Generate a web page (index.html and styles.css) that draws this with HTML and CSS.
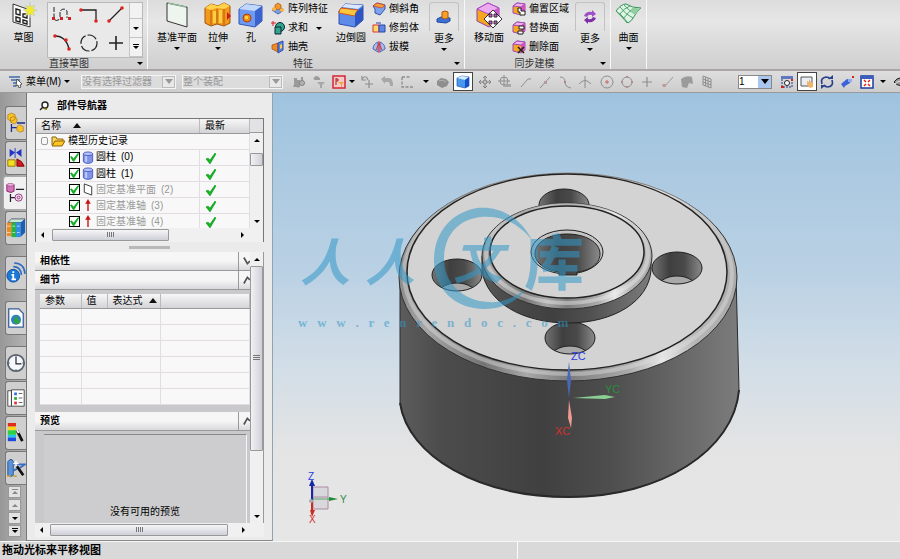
FILE: index.html
```html
<!DOCTYPE html>
<html lang="zh-CN">

<head>
    <meta charset="UTF-8">
    <meta name="viewport" content="width=device-width, initial-scale=1.0">
    <title>部件导航器</title>
    <link rel="stylesheet" href="styles.css">
</head>

<body>
    <!-- 公用图标 -->
    <svg class="defs" width="0" height="0">
        <symbol id="check" viewBox="0 0 12 12"><path d="M1 7l2-1 2 2 5-7 1 1-6 10z" fill="#12b422" stroke="#0a8c18" stroke-width=".5"/></symbol>
        <symbol id="cyl" viewBox="0 0 12 14"><path d="M1 3v8c0 3 10 3 10 0V3z" fill="#7f93ea" stroke="#4a5cc0"/><path d="M3 4v8h2V4z" fill="#c3cdfb"/><ellipse cx="6" cy="3" rx="5" ry="2" fill="#b5c1fa" stroke="#4a5cc0"/></symbol>
        <symbol id="axis" viewBox="0 0 12 14"><path d="M6 13V3" stroke="#c81414" stroke-width="1.5"/><path d="M6 0l3 5H3z" fill="#c81414"/></symbol>
        <symbol id="cube" viewBox="0 0 14 14"><path d="M1 4l4-3 8 1v8l-4 3-8-2z" fill="#f6a623" stroke="#a04bb4"/><path d="M1 4l4-3 8 1-4 3z" fill="#efb4ee" stroke="#a04bb4"/><path d="M9 5v8l4-3V2z" fill="#d44fc0"/></symbol>
    </svg>

    <header class="ribbon">
        <section class="group">
            <div class="tools">
                <button class="tool sketch">
                    <svg width="26" height="26" viewBox="0 0 26 26"><path d="M2 2l17 6v17L2 20z" fill="#fafafa" stroke="#333"/><path d="M5 7l4 1v5l-4-1zM12 12h4v4l-4-1zM5 15l4 1v4l-4-1zM12 18l4 1v3l-4-1z" fill="none" stroke="#222" stroke-width="1.4"/><path d="M19 0l1 5 4-2-2 4 4 1-4 2 2 4-4-2-1 4-1-4-4 2 2-4-4-2 4-1-2-4 4 2z" fill="#f4ea2c" stroke="#b5c7d6" stroke-width=".5"/></svg>
                    <span>草图</span>
                </button>
                <div class="gallery">
                    <div class="gallery-grid">
                        <button aria-label="轮廓"><svg width="22" height="20" viewBox="0 0 22 20"><path d="M3 2v12q2 3 6 0M9 12V6q4-4 7 0v7" fill="none" stroke="#222" stroke-dasharray="5 1.5"/><path d="M1 12h3v3H1zM9 12h3v3H9zM17 12h3v3h-3z" fill="#c22"/></svg></button>
                        <button aria-label="矩形"><svg width="22" height="20" viewBox="0 0 22 20"><path d="M3 5h15v10" fill="none" stroke="#222" stroke-width="1.3"/><circle cx="3" cy="5" r="1.8" fill="#d22"/><circle cx="18" cy="16" r="1.8" fill="#d22"/></svg></button>
                        <button aria-label="直线"><svg width="22" height="20" viewBox="0 0 22 20"><path d="M4 16L17 3" stroke="#222" stroke-width="1.3"/><circle cx="4" cy="16" r="1.8" fill="#d22"/><circle cx="17" cy="3" r="1.8" fill="#d22"/></svg></button>
                        <button aria-label="圆弧"><svg width="22" height="20" viewBox="0 0 22 20"><path d="M4 4q11 0 14 13" fill="none" stroke="#222" stroke-width="1.3"/><circle cx="4" cy="4" r="1.8" fill="#d22"/><circle cx="15" cy="8" r="1.8" fill="#d22"/><circle cx="18" cy="17" r="1.8" fill="#d22"/></svg></button>
                        <button aria-label="圆"><svg width="22" height="20" viewBox="0 0 22 20"><circle cx="11" cy="11" r="8" fill="none" stroke="#222" stroke-width="1.2" stroke-dasharray="10 2"/></svg></button>
                        <button aria-label="点"><svg width="22" height="20" viewBox="0 0 22 20"><path d="M11 4v14M4 11h14" stroke="#222" stroke-width="1.6"/></svg></button>
                    </div>
                    <div class="gallery-scroll">
                        <button aria-label="向上" disabled></button>
                        <button aria-label="向下"><i class="caret"></i></button>
                        <button aria-label="更多曲线"><i class="caret lined"></i></button>
                    </div>
                </div>
            </div>
            <div class="caption left"><span>直接草图</span><i class="caret"></i></div>
        </section>

        <section class="group feature">
            <div class="tools">
                <button class="tool plane">
                    <svg width="26" height="26" viewBox="0 0 26 26"><path d="M3 1l20 4v20L3 19z" fill="#eef5ee" stroke="#333"/><path d="M4 1l18 4" stroke="#8fb79a" stroke-width="1.5"/></svg>
                    <span>基准平面</span><i class="caret"></i>
                </button>
                <button class="tool extrude">
                    <svg width="28" height="26" viewBox="0 0 28 26"><path d="M1 6l6-4 7 2 6-3 6 3v17l-6 3-7-2-6 2-6-3z" fill="#f39a1d" stroke="#a5520c"/><path d="M1 6l6-4 7 2 6-3 6 3-6 3-7-1-6 2z" fill="#ffd34a"/><path d="M7 8v15M13 7v15M20 7v16" stroke="#b45a10"/><path d="M9 9h3v12H9zM15 8h3v13h-3z" fill="#ffcf42"/><path d="M23 10l4 4-4 4z" fill="#d21c1c"/></svg>
                    <span>拉伸</span><i class="caret"></i>
                </button>
                <button class="tool hole">
                    <svg width="26" height="26" viewBox="0 0 26 26"><path d="M1 7l7-5 16 2v15l-7 6-16-3z" fill="#6e9af0" stroke="#3357b8"/><path d="M1 7l7-5 16 2-7 5z" fill="#c1d8fc"/><path d="M17 9l7-5v15l-7 6z" fill="#3a63cf"/><circle cx="9" cy="16" r="4" fill="#f58a1c" stroke="#a53f0c"/><path d="M7 14h3v3H7z" fill="#ffd23e"/></svg>
                    <span>孔</span>
                </button>
                <div class="stack">
                    <button><svg width="14" height="14" viewBox="0 0 14 14"><path d="M1 8l6-4 6 4-6 4z" fill="#7ba0e8" stroke="#4463b0"/><path d="M4 3l3-2 3 2v3L7 8 4 6z" fill="#f3992a" stroke="#a6500e" stroke-width=".7"/><path d="M1 6l2-1 2 1v2L3 9 1 8zM9 7l2-1 2 1v2l-2 1-2-1z" fill="#f9b347"/></svg>阵列特征</button>
                    <button><svg width="14" height="14" viewBox="0 0 14 14"><circle cx="9" cy="6" r="4.500" fill="#2fa78c" stroke="#123"/><path d="M4 6h6v7H4z" fill="#2fa78c" stroke="#123"/><path d="M2 0v5M0 2h5" stroke="#d22"/></svg>求和<i class="caret"></i></button>
                    <button><svg width="14" height="14" viewBox="0 0 14 14"><path d="M1 5l6-2v9l-6-3z" fill="#f08a24" stroke="#a5480c" stroke-width=".7"/><path d="M7 3l5-2v9l-5 3z" fill="#5a82dd" stroke="#2c4ba8"/><path d="M9 5l2-1v4l-2 1z" fill="#ffcc44"/></svg>抽壳</button>
                </div>
                <button class="tool blend">
                    <svg width="28" height="26" viewBox="0 0 28 26"><path d="M2 9l6-7 18 1v15l-8 7-16-3z" fill="#5e8ae8" stroke="#2f50b0"/><path d="M8 2l18 1-5 4-16-2z" fill="#dbe8ff"/><path d="M4 6l17 2q-3 3-3 6L2 11q0-3 2-5z" fill="#ffc63d" stroke="#d0581a"/><path d="M18 14q0-5 8-9v13l-8 7z" fill="#2f55c4"/></svg>
                    <span>边倒圆</span>
                </button>
                <div class="stack second">
                    <button><svg width="14" height="14" viewBox="0 0 14 14"><path d="M1 4l4-3 8 2v4l-5 6-5-2V7z" fill="#7da2ee" stroke="#3454a8"/><path d="M1 4l4-3 8 2-3 3z" fill="#f3a032" stroke="#c33" stroke-width=".7"/></svg>倒斜角</button>
                    <button><svg width="14" height="14" viewBox="0 0 14 14"><path d="M1 4h6v7H1z" fill="#ffd96b" stroke="#d33"/><path d="M7 4h6v7H7z" fill="#5f86e6" stroke="#2846a8"/><path d="M4 2h5" stroke="#2846a8"/></svg>修剪体</button>
                    <button><svg width="14" height="14" viewBox="0 0 14 14"><path d="M1 9q0-5 5-7v10zM13 9q0-5-5-7v10z" fill="#a9bbed" stroke="#5268b8"/><path d="M7 1v12M4 10l3-7 3 7" fill="none" stroke="#d33"/></svg>拔模</button>
                </div>
                <button class="tool more">
                    <span class="more-box"><svg width="16" height="16" viewBox="0 0 16 16"><path d="M1 10l4-2 9 1v3l-4 2-9-1z" fill="#3c72d8" stroke="#1f479c"/><path d="M6 3l3-1 3 1v6l-3 1-3-1z" fill="#f5a12a" stroke="#ad560e"/></svg></span>
                    <span>更多</span><i class="caret"></i>
                </button>
            </div>
            <div class="caption"><span>特征</span><i class="caret"></i></div>
        </section>

        <section class="group sync">
            <div class="tools">
                <button class="tool move">
                    <svg width="28" height="26" viewBox="0 0 28 26"><path d="M2 7l11-6 11 5v13l-10 6-12-6z" fill="#f6a51f" stroke="#8e3eaa"/><path d="M2 7l11-6 11 5-11 6z" fill="#eeaaf0" stroke="#a54bc0"/><path d="M13 12l11-6v13l-10 6z" fill="#cf56cc"/><path d="M18 8l4 4h-3v3h3v-3l5 5-5 5v-3h-3v3h3l-4 4-4-4h3v-3h-3v3l-5-5 5-5v3h3v-3h-3z" fill="#fff" stroke="#222" stroke-width=".9"/></svg>
                    <span>移动面</span>
                </button>
                <div class="stack">
                    <button><svg width="14" height="14" viewBox="0 0 14 14"><use href="#cube"/><path d="M6 6h3v3h4v4H8v-3H6z" fill="#fff" stroke="#222"/></svg>偏置区域</button>
                    <button><svg width="14" height="14" viewBox="0 0 14 14"><use href="#cube"/><path d="M7 5h5v3H7zM6 10h5v3H6z" fill="#fff" stroke="#222"/></svg>替换面</button>
                    <button><svg width="14" height="14" viewBox="0 0 14 14"><use href="#cube"/><path d="M6 7l6 6M12 7l-6 6" stroke="#222" stroke-width="1.6"/></svg>删除面</button>
                </div>
                <button class="tool more">
                    <span class="more-box"><svg width="16" height="16" viewBox="0 0 16 16"><path d="M2 7q2-5 8-4V1l4 4-4 3V6Q6 5 5 8z" fill="#a04fc8"/><path d="M14 9q-2 5-8 4v2l-4-4 4-3v2q4 1 5-2z" fill="#7c2fa6"/></svg></span>
                    <span>更多</span><i class="caret"></i>
                </button>
            </div>
            <div class="caption"><span>同步建模</span><i class="caret"></i></div>
        </section>

        <section class="group surface">
            <div class="tools">
                <button class="tool">
                    <svg width="28" height="26" viewBox="0 0 28 26"><path d="M1 9q5-7 10-7 6 4 15 4-4 3-6 7-3 6-7 8Q7 13 1 9z" fill="#dff2e4" stroke="#3a8f5c"/><path d="M5 5q6 8 13 11M9 3q6 7 12 9M1 9q8 8 11 12M4 13q5-7 11-9M8 17q5-7 12-12" fill="none" stroke="#4ba66c"/><path d="M17 5q5 2 9 1-4 3-6 7-2-1-4-3z" fill="#8fcfa2"/></svg>
                    <span>曲面</span><i class="caret"></i>
                </button>
            </div>
        </section>
    </header>

    <nav class="toolbar">
        <button class="menu">
            <svg width="15" height="13" viewBox="0 0 15 13"><path d="M1 2h11M3 5h9M5 8h3M5 11h3" stroke="#456ba8" stroke-width="1.500"/><path d="M9 4l5 5-2 1 1 2-2 1-1-3-2 1z" fill="#fff" stroke="#333" stroke-width=".8"/></svg>
            菜单(M)<i class="caret"></i>
        </button>
        <i class="sep"></i>
        <label class="combo filter"><select disabled aria-label="选择过滤器"><option>没有选择过滤器</option></select><span class="drop"><i class="caret big"></i></span></label>
        <label class="combo scope"><select disabled aria-label="选择范围"><option>整个装配</option></select><span class="drop"><i class="caret big"></i></span></label>
        <div class="icons faded">
            <button aria-label="装配约束"><svg viewBox="0 0 14 14"><path d="M2 3h3v8H2zM5 5h3v7H5zM9 2h2v5H9z" fill="#888"/><circle cx="10" cy="8" r="2.500" fill="#aaa" stroke="#666"/><path d="M1 11l6 1" stroke="#777"/></svg></button>
            <button aria-label="过滤选择"><svg viewBox="0 0 14 14"><path d="M2 4q3-4 5 0M2 4h6" fill="none" stroke="#888" stroke-width="2"/><path d="M5 7h8l-3 3v3H8v-3z" fill="#999"/></svg></button>
        </div>
        <button class="icon-btn" aria-label="重置过滤器"><svg viewBox="0 0 14 14"><path d="M1 1h12v12H1z" fill="#f7c8c8" stroke="#d3263a" stroke-width="1.5"/><path d="M4 3v7M4 4h2v2H4" fill="none" stroke="#a22"/><path d="M6 7h6l-2 2v3H9V9z" fill="#f0a326"/></svg></button>
        <i class="caret"></i>
        <div class="icons faded undo">
            <button aria-label="撤消选择"><svg viewBox="0 0 14 14"><path d="M2 4q4-5 6 1M2 1v4h4M9 5v8M5 9h8" fill="none" stroke="#777" stroke-width="1.2"/></svg></button>
            <button aria-label="返回"><svg viewBox="0 0 14 14"><path d="M1 4l4-3v2h4q4 0 4 8h-3q0-4-2-4H5v2z" fill="#999"/></svg></button>
            <button aria-label="矩形选择"><svg viewBox="0 0 14 14"><path d="M2 2v10h11M2 2h8" fill="none" stroke="#777" stroke-width="1.300" stroke-dasharray="3 1.500"/></svg></button>
        </div>
        <i class="caret wide"></i>
        <div class="icons">
            <button class="faded" aria-label="实体"><svg viewBox="0 0 14 14"><path d="M1 6l4-3 5 1 3 3-2 4-5 2-5-3z" fill="#777"/><path d="M3 6q4-2 7 1" stroke="#aaa" fill="none"/></svg></button>
            <button class="active" aria-label="着色"><svg viewBox="0 0 14 14"><path d="M1 3l5-2 7 1v9l-4 2-8-2z" fill="#4a97ee" stroke="#1c58b8" stroke-width=".7"/><path d="M1 3l5-2 7 1-4 3z" fill="#d5ecff"/><path d="M9 5l4-3v9l-4 2z" fill="#1550c4"/></svg></button>
        </div>
        <div class="icons faded snaps">
            <button aria-label="移动点"><svg viewBox="0 0 14 14"><path d="M7 1v12M1 7h12M5 3l2-2 2 2M5 11l2 2 2-2M3 5L1 7l2 2M11 5l2 2-2 2" fill="none" stroke="#666"/><circle cx="7" cy="7" r="2" fill="#bbb" stroke="#666"/></svg></button>
            <button aria-label="捕捉点"><svg viewBox="0 0 14 14"><circle cx="6" cy="6" r="4" fill="none" stroke="#777"/><path d="M6 0v12M0 6h12" stroke="#777"/><path d="M7 9h6v3H7z" fill="#999"/></svg></button>
            <button aria-label="端点"><svg viewBox="0 0 14 14"><path d="M3 12l7-8h3" fill="none" stroke="#777"/></svg></button>
            <button aria-label="中点"><svg viewBox="0 0 14 14"><path d="M2 13L12 2" stroke="#777"/><path d="M6 6h3v3H6z" fill="#a88"/></svg></button>
            <button aria-label="控制点"><svg viewBox="0 0 14 14"><path d="M2 2q5 0 5 5t6 6" fill="none" stroke="#777"/><path d="M6 6h2v2H6z" fill="#a66"/></svg></button>
            <button aria-label="交点"><svg viewBox="0 0 14 14"><path d="M1 9q6-7 12 0M7 1v12" fill="none" stroke="#777"/></svg></button>
        </div>
        <div class="icons faded snaps">
            <button aria-label="圆弧中心"><svg viewBox="0 0 14 14"><circle cx="7" cy="7" r="6" fill="none" stroke="#777"/><path d="M7 5v4M5 7h4" stroke="#b44"/></svg></button>
            <button aria-label="象限点"><svg viewBox="0 0 14 14"><circle cx="7" cy="7" r="5" fill="none" stroke="#777"/><path d="M6 1h2v2H6zM6 11h2v2H6zM1 6h2v2H1zM11 6h2v2h-2z" fill="#a77"/></svg></button>
            <button aria-label="现有点"><svg viewBox="0 0 14 14"><path d="M7 2v10M2 7h10" stroke="#777" stroke-width="1.200"/></svg></button>
            <button aria-label="曲线上的点"><svg viewBox="0 0 14 14"><path d="M2 10l3 1L13 2" fill="none" stroke="#888"/><path d="M3 9h3v3H3z" fill="#b88"/></svg></button>
            <button aria-label="面上的点"><svg viewBox="0 0 14 14"><path d="M1 4q5-4 11-2l1 7-4-1-2 5-5-1z" fill="#888"/></svg></button>
            <button aria-label="网格点"><svg viewBox="0 0 14 14"><path d="M3 1l8 3v9l-8-3zM5.500 2v9M8 3v9M3 4l8 3M3 7l8 3" fill="none" stroke="#777"/></svg></button>
        </div>
        <i class="sep dark"></i>
        <label class="combo layer"><select aria-label="图层"><option>1</option></select><span class="drop"><i class="caret big"></i></span></label>
        <div class="icons view">
            <button aria-label="缩放窗口"><svg viewBox="0 0 14 14"><path d="M2 2h10v10H2z" fill="none" stroke="#22388a" stroke-dasharray="2 1"/><path d="M1 1h12v3H1z" fill="#6078c0"/><circle cx="7" cy="8" r="2.500" fill="#fff" stroke="#222"/><path d="M1 11h3v2H1zM11 4h2v2h-2z" fill="#c22"/></svg></button>
            <button class="active" aria-label="适合窗口"><svg viewBox="0 0 14 14"><path d="M1 2h11v9H1z" fill="#e7eef8" stroke="#555"/><path d="M7 6l2 1V4l2 3 2 1v4l-3 1-3-3z" fill="#f2b46a"/></svg></button>
            <button aria-label="旋转"><svg viewBox="0 0 14 14"><path d="M2 9Q0 3 6 2q3 0 4 2M12 5q2 6-4 7-3 0-4-2" fill="none" stroke="#27418e" stroke-width="1.700"/><path d="M8 4h5V0zM6 10H1v4z" fill="#27418e"/></svg></button>
            <button aria-label="渲染样式"><svg viewBox="0 0 14 14"><path d="M1 9l6-5 4 1-1 3-5 3-1 2z" fill="#3c62d8"/><path d="M8 4h4v3H8z" fill="#8eaaf4"/><path d="M12 1h2v2h-2z" fill="#c22"/></svg></button>
            <button aria-label="窗口布局"><svg viewBox="0 0 14 14"><path d="M1 1h12v12H1z" fill="#fff" stroke="#1c3da0" stroke-width="1.500"/><path d="M1 1h12v3H1z" fill="#3b5cc0"/><path d="M4 5l2 2M10 5L8 7M4 11l2-2M10 11L8 9" stroke="#d22" stroke-width="1.500"/></svg></button>
        </div>
        <i class="caret wide"></i>
        <button class="icon-btn" aria-label="显示和隐藏"><svg viewBox="0 0 14 14"><path d="M1 7q6-8 12 0-6 7-12 0z" fill="#999" stroke="#222"/><path d="M2 9q5-5 10-2" fill="none" stroke="#eee"/></svg></button>
    </nav>

    <main>
        <aside class="resource-bar">
            <button class="tab" aria-label="装配导航器"><svg viewBox="0 0 22 24"><path d="M2 3l4-2 4 2v5l-4 2-4-2zM5 6l4-1 3 2v4l-3 2-4-2z" fill="#f7c32b" stroke="#b87b08" stroke-width=".8"/><path d="M6 13v9M6 17h6M12 12h9" stroke="#1b2a8c" stroke-width="1.400"/><path d="M12 16l3-2 4 2v5l-4 1-3-2z" fill="#f7c32b" stroke="#b87b08" stroke-width=".8"/></svg></button>
            <button class="tab" aria-label="约束导航器"><svg viewBox="0 0 22 24"><path d="M4 2l6 4-6 5zM17 2l-6 4 6 5z" fill="#2034c8"/><path d="M10 1v11" stroke="#2034c8"/><path d="M2 14h8v7H2z" fill="#f5e020" stroke="#976f00"/><path d="M12 21v-8q6 2 8 8z" fill="#d81818" stroke="#700"/></svg></button>
            <button class="tab current" aria-label="部件导航器"><svg viewBox="0 0 22 24"><path d="M2 3v7q5 3 8 0V3z" fill="#d572b8" stroke="#7c2a6c"/><ellipse cx="6" cy="3" rx="4" ry="1.500" fill="#f4b4e0" stroke="#7c2a6c" stroke-width=".6"/><path d="M12 8h9M6 13v9M6 17h5" stroke="#223" stroke-width="1.400"/><circle cx="15" cy="17" r="4" fill="#f6d8f0" stroke="#8a3478"/><circle cx="15" cy="17" r="1.500" fill="none" stroke="#8a3478"/></svg></button>
            <button class="tab" aria-label="重用库"><svg viewBox="0 0 22 24"><path d="M2 6l4-4h15l-4 4z" fill="#c8ead2" stroke="#557"/><path d="M1 6h5v15H1z" fill="#f08a1c"/><path d="M6 6h5v16H6z" fill="#28b04c"/><path d="M11 6h5v16h-5z" fill="#2f8fe0"/><path d="M16 6l5-4v15l-5 5z" fill="#1a5fb4"/><path d="M1 10h4M1 17h4M7 10h3M7 17h3M12 10h3M12 17h3" stroke="#fff" stroke-opacity=".7"/></svg></button>
            <button class="tab apart" aria-label="HD3D 工具"><svg viewBox="0 0 22 24"><circle cx="8" cy="15" r="7" fill="#1b79d8" stroke="#0f4d98"/><path d="M8 10v2M6 14h2v5M6 19h5" stroke="#fff" stroke-width="2" fill="none"/><path d="M8 5q8 0 9 9M9 1q11 0 12 12" fill="none" stroke="#2f6cc0" stroke-width="1.800"/></svg></button>
            <button class="tab apart" aria-label="浏览器"><svg viewBox="0 0 22 24"><path d="M3 2h11l5 5v15H3z" fill="#fff" stroke="#355f9c" stroke-width="1.400"/><circle cx="11" cy="14" r="5.500" fill="#2f7fc8"/><path d="M8 16l3-7 2 3 3 5-5 2z" fill="#2fa444"/></svg></button>
            <button class="tab apart" aria-label="历史记录"><svg viewBox="0 0 22 24"><circle cx="11" cy="12" r="9" fill="#f5f8fc" stroke="#596270" stroke-width="2"/><path d="M11 5v8h6" fill="none" stroke="#223" stroke-width="1.300"/><path d="M11 4v1M11 19v1M3 12h1M18 12h1" stroke="#223"/></svg></button>
            <button class="tab" aria-label="系统材料"><svg viewBox="0 0 22 24"><path d="M2 4h4v17H2zM6 3h14v18H6z" fill="#fff" stroke="#444"/><path d="M9 6h3v3H9z" fill="#2a6fe0"/><path d="M9 11h3v3H9z" fill="#27a838"/><path d="M9 16h3v3H9z" fill="#d33"/><path d="M14 7h4M14 12h4M14 17h4" stroke="#555"/></svg></button>
            <button class="tab" aria-label="可视化"><svg viewBox="0 0 22 24"><path d="M2 1h9v4H2z" fill="#e02a1a"/><path d="M2 5h9v4H2z" fill="#f6d51c"/><path d="M2 9h9v5H2z" fill="#2dd040"/><path d="M2 14h9v3H2z" fill="#23c4e8"/><path d="M2 17h9v4H2z" fill="#1d49dc"/><path d="M12 9l6 12" stroke="#111" stroke-width="3"/><path d="M12 9l2 3" stroke="#fff" stroke-width="2"/></svg></button>
            <button class="tab" aria-label="角色"><svg viewBox="0 0 22 24"><path d="M2 5q4-5 6 0v15q-3 3-6 0z" fill="#5b93d6" stroke="#225398"/><path d="M8 8h13l-6 4M8 15l4-2" fill="none" stroke="#3a6fc0" stroke-width="2"/><path d="M1 21h4M8 21h4" stroke="#c9a53c" stroke-width="2"/><path d="M12 10l7 10" stroke="#111" stroke-width="3"/><path d="M11 4v6M8 7h6" stroke="#fff" stroke-width="1.500"/></svg></button>
            <div class="pager">
                <button aria-label="首页" disabled><i class="caret up lined"></i></button>
                <button aria-label="上一页" disabled><i class="caret up"></i></button>
                <button aria-label="下一页"><i class="caret"></i></button>
                <button aria-label="末页"><i class="caret lined"></i></button>
            </div>
        </aside>

        <section class="navigator">
            <h1><svg width="10" height="10" viewBox="0 0 10 10"><circle cx="6" cy="4" r="3" fill="#fff" stroke="#222" stroke-width="1.400"/><path d="M1 9l3-3" stroke="#222" stroke-width="1.400"/><path d="M5 7l3 1" stroke="#776b10" stroke-width="2"/></svg>部件导航器</h1>

            <div class="tree-box">
                <div class="tree-body">
                    <div class="tree-clip">
                        <table class="tree">
                            <thead>
                                <tr><th>名称<i class="sort"></i></th><th class="latest">最新</th></tr>
                            </thead>
                            <tbody>
                                <tr><td class="root"><i class="expander"></i><svg width="14" height="12" viewBox="0 0 14 12"><path d="M1 10V2h4l1 2h6v2" fill="#fbd45e" stroke="#8a6208"/><path d="M1 11l3-5h10l-3 5z" fill="#ffc426" stroke="#8a6208"/></svg>模型历史记录</td><td></td></tr>
                                <tr><td><label><input type="checkbox" checked><svg width="12" height="14"><use href="#cyl"/></svg>圆柱&ensp;(0)</label></td><td><svg width="12" height="12"><use href="#check"/></svg></td></tr>
                                <tr><td><label><input type="checkbox" checked><svg width="12" height="14"><use href="#cyl"/></svg>圆柱&ensp;(1)</label></td><td><svg width="12" height="12"><use href="#check"/></svg></td></tr>
                                <tr class="dim"><td><label><input type="checkbox" checked><svg width="12" height="14" viewBox="0 0 12 14"><path d="M2 1l8 3v9l-8-3z" fill="#fff" stroke="#333"/></svg>固定基准平面&ensp;(2)</label></td><td><svg width="12" height="12"><use href="#check"/></svg></td></tr>
                                <tr class="dim"><td><label><input type="checkbox" checked><svg width="12" height="14"><use href="#axis"/></svg>固定基准轴&ensp;(3)</label></td><td><svg width="12" height="12"><use href="#check"/></svg></td></tr>
                                <tr class="dim"><td><label><input type="checkbox" checked><svg width="12" height="14"><use href="#axis"/></svg>固定基准轴&ensp;(4)</label></td><td><svg width="12" height="12"><use href="#check"/></svg></td></tr>
                            </tbody>
                        </table>
                    </div>
                    <div class="vscroll tree-scroll"><i class="caret up"></i><span class="thumb"></span><i class="caret"></i></div>
                </div>
                <div class="hscroll"><i class="caret to-left"></i><span class="thumb"></span><i class="caret to-right"></i></div>
            </div>
            <div class="splitter"></div>

            <div class="details">
                <div class="details-body">
                    <button class="bar">相依性<svg width="8" height="10" viewBox="0 0 8 10"><path d="M1 1l4 7 3-3" fill="none" stroke="#555" stroke-width="2"/></svg></button>
                    <button class="bar">细节<svg width="8" height="10" viewBox="0 0 8 10"><path d="M1 9l4-7 3 3" fill="none" stroke="#555" stroke-width="2"/></svg></button>
                    <div class="params">
                        <table>
                            <thead>
                                <tr><th class="c-param">参数</th><th class="c-value">值</th><th class="c-expr">表达式<i class="sort"></i></th><th></th></tr>
                            </thead>
                            <tbody>
                                <tr><td></td><td></td><td></td><td></td></tr>
                                <tr><td></td><td></td><td></td><td></td></tr>
                                <tr><td></td><td></td><td></td><td></td></tr>
                                <tr><td></td><td></td><td></td><td></td></tr>
                                <tr><td></td><td></td><td></td><td></td></tr>
                                <tr><td></td><td></td><td></td><td></td></tr>
                            </tbody>
                        </table>
                    </div>
                    <button class="bar">预览<svg width="8" height="10" viewBox="0 0 8 10"><path d="M1 9l4-7 3 3" fill="none" stroke="#555" stroke-width="2"/></svg></button>
                    <div class="preview"><p>没有可用的预览</p></div>
                </div>
                <div class="vscroll"><i class="caret up"></i><span class="thumb grip"></span><i class="caret"></i></div>
            </div>
            <div class="hscroll lower"><i class="caret to-left"></i><span class="thumb"></span><i class="caret to-right"></i></div>
        </section>

        <section class="viewport">
            <svg class="scene" viewBox="273 93 627 448">
                <defs>
                    <linearGradient id="side"><stop offset="0" stop-color="#5c5c5c"/><stop offset=".12" stop-color="#4c4c4c"/><stop offset=".42" stop-color="#404040"/><stop offset=".62" stop-color="#4e4e4e"/><stop offset=".85" stop-color="#6a6a6a"/><stop offset="1" stop-color="#7c7c7c"/></linearGradient>
                    <linearGradient id="rim"><stop offset="0" stop-color="#8d8d8d"/><stop offset=".08" stop-color="#a6a6a6"/><stop offset=".25" stop-color="#747474"/><stop offset=".38" stop-color="#a8a8a8"/><stop offset=".5" stop-color="#7c7c7c"/><stop offset=".68" stop-color="#aaa"/><stop offset=".78" stop-color="#e8e8e8"/><stop offset=".88" stop-color="#b5b5b5"/><stop offset="1" stop-color="#aaa"/></linearGradient>
                    <linearGradient id="wall"><stop offset="0" stop-color="#747474"/><stop offset=".35" stop-color="#3f3f3f"/><stop offset=".65" stop-color="#4a4a4a"/><stop offset="1" stop-color="#8a8a8a"/></linearGradient>
                    <g id="bolt-hole">
                        <clipPath id="hole-clip"><ellipse rx="25" ry="16"/></clipPath>
                        <ellipse rx="25" ry="16" fill="url(#wall)"/>
                        <g clip-path="url(#hole-clip)"><ellipse cy="21" rx="20" ry="13" fill="#a9a9a9" stroke="#222"/></g>
                        <ellipse rx="25" ry="16" fill="none" stroke="#222"/>
                    </g>
                </defs>

                <!-- 外圆柱 -->
                <path d="M400 280V403C408 456 478 497 569 497C662 497 734 450 739 390L736 275z" fill="url(#side)" stroke="#2a2a2a"/>
                <path d="M400 403C408 456 478 497 569 497C662 497 734 450 739 390" fill="none" stroke="#2a2a2a" stroke-width="2"/>
                <ellipse cx="568" cy="277" rx="169" ry="104" fill="url(#rim)" stroke="#333"/>
                <ellipse cx="568" cy="274" rx="164" ry="100" fill="none" stroke="#ddd" stroke-width="4" opacity=".45"/>
                <ellipse cx="567" cy="272" rx="160" ry="98" fill="#d3d3d3" stroke="#222" stroke-width="1.500"/>
                <use href="#bolt-hole" x="564" y="205"/>
                <use href="#bolt-hole" x="457" y="275"/>
                <use href="#bolt-hole" x="677" y="268"/>
                <use href="#bolt-hole" x="570" y="338"/>

                <!-- 凸台 -->
                <path d="M482 256V271C487 302 522 323 568 323C614 323 649 301 651 270V256z" fill="url(#side)" stroke="#222"/>
                <ellipse cx="567" cy="256" rx="85" ry="53" fill="url(#rim)" stroke="#333"/>
                <ellipse cx="567" cy="254" rx="81" ry="49" fill="none" stroke="#eee" stroke-width="4" opacity=".45"/>
                <ellipse cx="567" cy="252" rx="77" ry="46" fill="#d3d3d3" stroke="#222" stroke-width="1.500"/>
                <ellipse cx="567" cy="252" rx="36" ry="22" fill="#c4c4c4" stroke="#222"/>
                <path d="M559 272v3h18v-3C593 270 600 262 600 254C600 242 585 234 567 234S535 242 535 254C535 262 544 270 559 272z" fill="url(#wall)" stroke="#222"/>

                <!-- 工作坐标系 -->
                <path d="M569 362l2 18-2 18-2-18z" fill="#4b68b8"/>
                <path d="M573 398l32-3 10 2-10 2z" fill="#8bcf94"/>
                <path d="M569 400l3 18-1 10-3-10z" fill="#f09a94"/>
                <text class="csys" x="571" y="360" fill="#2b3ce0">ZC</text>
                <text class="csys" x="605" y="393" fill="#2b8c3c">YC</text>
                <text class="csys" x="555" y="435" fill="#d43030">XC</text>

                <!-- 绝对坐标系 -->
                <path d="M313 487h15v22h-15zM313 497h15" fill="#d8d8dc" stroke="#b08aa4"/>
                <path d="M312 500V484" stroke="#1428a8" stroke-width="2"/><path d="M312 479l3 7h-6z" fill="#1428a8"/>
                <path d="M313 499h18" stroke="#5aa868"/><path d="M338 499l-9-2v4z" fill="#1d8c34"/>
                <path d="M312 501v11" stroke="#cc2b20" stroke-width="2"/><path d="M312 517l-2-7h5z" fill="#cc2b20"/>
                <circle cx="311" cy="501" r="2" fill="#aaa"/>
                <text class="csys small" x="308" y="480" fill="#2b3ce0">Z</text>
                <text class="csys small" x="340" y="503" fill="#2b8c3c">Y</text>
                <text class="csys small" x="309" y="523" fill="#d43030">X</text>

                <!-- 水印 -->
                <g class="mark">
                    <path d="M532 240C520 217 500 206 477 208C449 213 434 235 434 260C434 289 455 309 485 309C501 309 517 302 525 290C512 299 499 303 488 302C461 300 443 281 444 257C445 235 458 220 480 217C501 215 518 223 532 240z"/>
                    <text class="brush" x="300" y="281">人</text>
                    <text class="brush" x="365" y="281">人</text>
                    <text class="brush" x="453" y="279">文</text>
                    <text class="brush tall" x="524" y="285">库</text>
                    <text class="site" x="298" y="327">w   w   w   .   r   e   n   r   e   n   d   o   c   .   c   o   m</text>
                </g>
            </svg>
        </section>
    </main>

    <footer class="status"><p>拖动光标来平移视图</p><p></p></footer>
</body>

</html>
```
FILE: styles.css
```css
* {
    box-sizing: border-box;
}

body {
    display: flex;
    flex-direction: column;
    height: 100vh;
    margin: 0;
    overflow: hidden;
    background: #e4e4e4;
    color: #000;
    font-family: "Liberation Sans", "Noto Sans CJK SC", sans-serif;
    font-size: 10px;
    line-height: 12px;
}

button {
    padding: 0;
    border: 0;
    background: none;
    color: inherit;
    font: inherit;
    white-space: nowrap;
}

.defs {
    position: absolute;
}

svg {
    flex: none;
}

/* 菜单小三角 */
.caret {
    flex: none;
    width: 0;
    height: 0;
    border: 3px solid transparent;
    border-top-color: #000;
    border-bottom-width: 0;
}

.caret.up {
    border-width: 0 3px 3px;
    border-color: transparent transparent #000;
}

.caret.to-left {
    border-width: 3px 3px 3px 0;
    border-color: transparent #000;
}

.caret.to-right {
    border-width: 3px 0 3px 3px;
    border-color: transparent #000;
}

.caret.big {
    border-width: 5px 4px 0;
}

.caret.lined {
    position: relative;
}

.caret.lined::before {
    position: absolute;
    top: -5px;
    left: -3px;
    width: 6px;
    height: 1px;
    background: #000;
    content: "";
}

.caret.up.lined::before {
    top: -2px;
}

button:disabled .caret {
    opacity: .4;
}

/* 功能区 */
.ribbon {
    display: flex;
    flex: none;
    height: 69px;
    background: linear-gradient(#dcdcdc, #e6e6e6 30%, #cfcfcf);
}

.group {
    display: flex;
    flex-direction: column;
    padding: 2px 4px 0 0;
    border-right: 1px solid #f8f8f8;
}

.feature,
.sync {
    padding-left: 4px;
}

.tools {
    display: flex;
    flex: none;
    height: 56px;
}

.tool {
    display: flex;
    flex-direction: column;
    align-items: center;
    width: 40px;
}

.tool span {
    margin: 4px 0 3px;
}

.sketch {
    width: 47px;
}

.plane {
    width: 50px;
}

.extrude {
    width: 32px;
}

.hole {
    width: 34px;
}

.blend {
    width: 36px;
}

.surface {
    padding-right: 0;
}

.surface .tool {
    width: 35px;
}

.tool.more {
    width: 32px;
}

.tool .more-box {
    display: grid;
    place-items: center;
    width: 30px;
    height: 29px;
    margin: 0 0 -2px;
    border: 1px solid #c2c2c2;
    border-bottom: 0;
    border-radius: 3px 3px 0 0;
}

.gallery {
    display: flex;
    width: 96px;
    border: 1px solid #b9b9b9;
    background: #e9e9e9;
}

.gallery-grid {
    display: grid;
    flex: 1;
    grid-template-columns: repeat(3, 1fr);
    place-items: center;
}

.gallery-scroll {
    display: grid;
    width: 13px;
    background: #f2f2f2;
}

.gallery-scroll button {
    display: grid;
    place-items: center;
    border: 1px solid #c4c4c4;
    border-width: 0 0 1px 1px;
}

.stack {
    display: flex;
    flex-direction: column;
    justify-content: space-between;
    width: 65px;
    padding: 0 0 4px 3px;
}

.stack.second {
    width: 59px;
}

.stack button {
    display: flex;
    align-items: center;
    gap: 3px;
}

.stack .caret {
    margin-left: 5px;
}

.caption {
    display: flex;
    align-items: center;
    height: 11px;
    color: #333;
}

.caption span {
    flex: 1;
    text-align: center;
}

.caption.left span {
    padding-left: 49px;
    text-align: left;
}

/* 选择条 */
.toolbar {
    display: flex;
    flex: none;
    align-items: center;
    height: 24px;
    overflow: hidden;
    border-top: 2px solid #a9a5a9;
    border-bottom: 1px solid #9a9a9a;
    background: linear-gradient(#dedede, #cdcdcd);
}

.menu {
    display: flex;
    align-items: center;
    gap: 3px;
    width: 66px;
    margin-left: 8px;
}

.sep {
    width: 1px;
    height: 16px;
    margin-right: 8px;
    background: #f4f4f4;
}

.sep.dark {
    margin: 0 10px 0 11px;
    background: #aaa;
}

.combo {
    display: flex;
    flex: none;
    height: 14px;
    border: 1px solid #f4f4f4;
    background: #dcdcdc;
}

.combo select {
    flex: 1;
    min-width: 0;
    padding: 0;
    border: 0;
    appearance: none;
    background: none;
    color: #000;
    font: inherit;
}

.combo select:disabled {
    color: #999;
    opacity: 1;
}

.combo .drop {
    display: grid;
    place-items: center;
    width: 13px;
    border: 1px solid #bbb;
    background: #e8e8e8;
}

.filter {
    width: 95px;
    margin-right: 6px;
}

.scope {
    width: 101px;
    margin-right: 6px;
}

.filter .caret,
.scope .caret {
    border-top-color: #999;
}

.layer {
    width: 34px;
    border-color: #888;
    background: #fff;
}

.layer .drop {
    border: 0;
    background: #a9c6ef;
}

.icons {
    display: flex;
    flex: none;
}

.menu,
.undo {
    margin-right: 3px;
}

.undo,
.snaps {
    margin-left: 2px;
}

.view {
    margin-left: 5px;
}

.faded {
    opacity: .75;
}

.icons button,
.icon-btn {
    display: grid;
    flex: none;
    place-items: center;
    width: 20px;
    height: 19px;
}

.icons svg,
.icon-btn svg {
    width: 14px;
    height: 14px;
}

.icons .active {
    border: 1px solid #444;
    background: #fff;
}

.toolbar .caret.wide {
    margin: 0 4px 0 3px;
}

main {
    display: flex;
    flex: 1;
    min-height: 0;
}

/* 资源条 */
.resource-bar {
    display: flex;
    flex: none;
    flex-direction: column;
    align-items: flex-end;
    gap: 1px;
    width: 27px;
    padding-top: 13px;
    border-right: 1px solid #777;
    background: linear-gradient(90deg, #989898, #b2b2b2);
}

.tab {
    display: grid;
    flex: none;
    place-items: center;
    width: 21px;
    height: 34px;
    border: 1px solid #777;
    border-right: 0;
    border-radius: 3px 0 0 3px;
    background: #cfcfcf;
}

.tab svg {
    width: 20px;
    height: 24px;
}

.tab.current {
    width: 23px;
    border-color: #aaa;
    background: #f0f0f0;
}

.tab.apart {
    margin-top: 10px;
}

.pager {
    display: grid;
    gap: 1px;
    width: 18px;
}

.pager button {
    display: grid;
    place-items: center;
    width: 13px;
    height: 12px;
    border: 1px solid #999;
    background: #e2e2e2;
}

/* 部件导航器 */
.navigator {
    display: flex;
    flex: none;
    flex-direction: column;
    width: 246px;
    padding: 0 8px 3px 8px;
    border-right: 1px solid #8fa3b3;
    border-bottom: 1px solid #888;
    background: #ebebeb;
}

.navigator h1 {
    display: flex;
    align-items: center;
    gap: 8px;
    height: 25px;
    margin: 0;
    padding-left: 4px;
    font-size: 10px;
}

.navigator table {
    width: 100%;
    border-collapse: collapse;
    table-layout: fixed;
    background: #f8f8f8;
}

.navigator th {
    height: 14px;
    padding: 0 0 0 5px;
    border-right: 1px solid #bbb;
    border-bottom: 1px solid #999;
    background: linear-gradient(#f6f6f6, #d4d4d8);
    font-weight: normal;
    text-align: left;
}

.sort {
    display: inline-block;
    margin: 0 0 1px 12px;
    border: 4px solid transparent;
    border-top-width: 0;
    border-bottom: 5px solid #111;
}

.tree-box {
    border: 1px solid #777;
    border-width: 1px 1px 0;
}

.tree-body {
    display: flex;
}

.tree-clip {
    flex: 1;
    height: 109px;
    overflow: hidden;
    background: #f8f8f8;
}

.tree .latest {
    width: 50px;
}

.tree td {
    height: 16px;
    padding: 0 5px;
    border-right: 1px solid #e3dde3;
    border-bottom: 1px solid #e3dde3;
    white-space: nowrap;
}

.tree td svg {
    display: block;
}

.tree label,
.tree .root {
    display: flex;
    align-items: center;
    gap: 3px;
}

.tree label {
    gap: 2px;
    padding-left: 28px;
}

.tree .root {
    border-right: 0;
}

.expander {
    width: 7px;
    height: 8px;
    border: 1px solid #999;
    border-radius: 2px;
}

.dim {
    color: #999;
}

.tree input {
    width: 11px;
    height: 11px;
    margin: 0;
    border: 1px solid #000;
    appearance: none;
    background: #fff;
}

.tree input:checked::before {
    display: block;
    width: 9px;
    height: 9px;
    background: #10ae20;
    clip-path: polygon(0 45%, 20% 40%, 40% 65%, 90% 0, 100% 15%, 45% 100%, 30% 95%);
    content: "";
}

.tree label svg {
    height: 13px;
}

.vscroll {
    display: flex;
    flex: none;
    flex-direction: column;
    align-items: center;
    justify-content: space-between;
    width: 13px;
    padding: 6px 0 5px;
    background: #f0f0f0;
}

.thumb {
    width: 13px;
    border: 1px solid #999;
    border-radius: 1px;
    background: linear-gradient(90deg, #f2f2f4, #cfcfd8);
}

.tree-scroll {
    padding-top: 20px;
    background: linear-gradient(#e2e2e4 13px, #999 13px, #999 14px, #f0f0f0 14px);
}

.tree-scroll .thumb {
    height: 13px;
    margin-bottom: 44px;
}

.hscroll {
    display: flex;
    flex: none;
    align-items: center;
    justify-content: space-between;
    height: 14px;
    padding: 0 19px 0 5px;
    background: #f0f0f0;
}

.hscroll .thumb {
    width: 117px;
    height: 12px;
    margin-right: 64px;
    background: linear-gradient(#f6f6f8, #cfcfd8);
}

.hscroll .thumb::after,
.grip::after {
    display: block;
    width: 7px;
    height: 5px;
    margin: 2px auto;
    background: repeating-linear-gradient(90deg, #777 0 1px, transparent 1px 2px);
    content: "";
}

.splitter {
    flex: none;
    align-self: center;
    width: 41px;
    height: 3px;
    margin: 4px 0 3px;
    background: #b8b8b8;
}

.details {
    display: flex;
    flex: 1;
    min-height: 0;
    border-right: 1px solid #999;
}

.details-body {
    display: flex;
    flex: 1;
    flex-direction: column;
    min-width: 0;
    background: #c9c9cb;
}

.bar {
    display: flex;
    flex: none;
    align-items: center;
    justify-content: space-between;
    height: 19px;
    padding-left: 5px;
    border-bottom: 1px solid #999;
    background: linear-gradient(#f6f6f6 50%, #d9d9dc);
    font-weight: bold;
}

.bar svg {
    width: 12px;
    height: 18px;
    padding: 4px 0 4px 4px;
    border-left: 1px solid #999;
}

.params {
    padding: 4px 0 7px 5px;
}

.params table {
    border-bottom: 1px solid #888;
}

.params td {
    height: 16px;
    padding: 0;
    border: 1px solid #e3dde3;
    border-left: 0;
}

.params td:nth-child(2) {
    border-right: 0;
}

.params .c-param {
    width: 41px;
}

.params .c-value {
    width: 26px;
}

.params .c-expr {
    width: 53px;
}

.params .c-expr .sort {
    margin-left: 6px;
}

.preview {
    display: flex;
    flex: 1;
    align-items: flex-end;
    justify-content: center;
    margin: 3px 3px 0 9px;
    padding-bottom: 5px;
    border-top: 1px solid #888;
    border-right: 1px solid #f4f4f4;
    background: #cdcdcf;
}

.preview p {
    margin: 0;
}

.details .thumb {
    display: grid;
    flex: none;
    align-items: center;
    height: 185px;
    margin-bottom: 60px;
}

.grip::after {
    height: 6px;
    background: repeating-linear-gradient(#777 0 1px, transparent 1px 2px);
}

.hscroll.lower .thumb {
    flex: 1;
    margin: 0 14px 0 7px;
}

/* 图形窗口 */
.viewport {
    flex: 1;
    min-width: 0;
    background: linear-gradient(#9fc3df, #bad1e4 40%, #d3dee7 62%, #e4e4e4 80%, #e6e6e6);
}

.scene {
    display: block;
    width: 100%;
    height: 100%;
}

.csys {
    font-size: 11px;
}

.csys.small {
    font-size: 10px;
}

.mark {
    fill: #3498c8;
    opacity: .55;
}

.brush {
    font-family: "Noto Sans CJK SC", sans-serif;
    font-size: 50px;
    font-style: italic;
    font-weight: bold;
}

.brush.tall {
    font-size: 60px;
    font-style: normal;
}

.site {
    font-family: "Liberation Serif", serif;
    font-size: 13px;
    font-weight: bold;
    white-space: pre;
}

.status {
    display: flex;
    flex: none;
    height: 18px;
    border-top: 1px solid #f6f6f6;
    background: #d9d9d9;
    font-size: 11px;
    font-weight: bold;
}

.status p {
    flex: 1;
    margin: 0;
    padding: 2px;
}

.status p:first-child {
    flex: 0 0 518px;
    border-right: 1px solid #fafafa;
}
```
